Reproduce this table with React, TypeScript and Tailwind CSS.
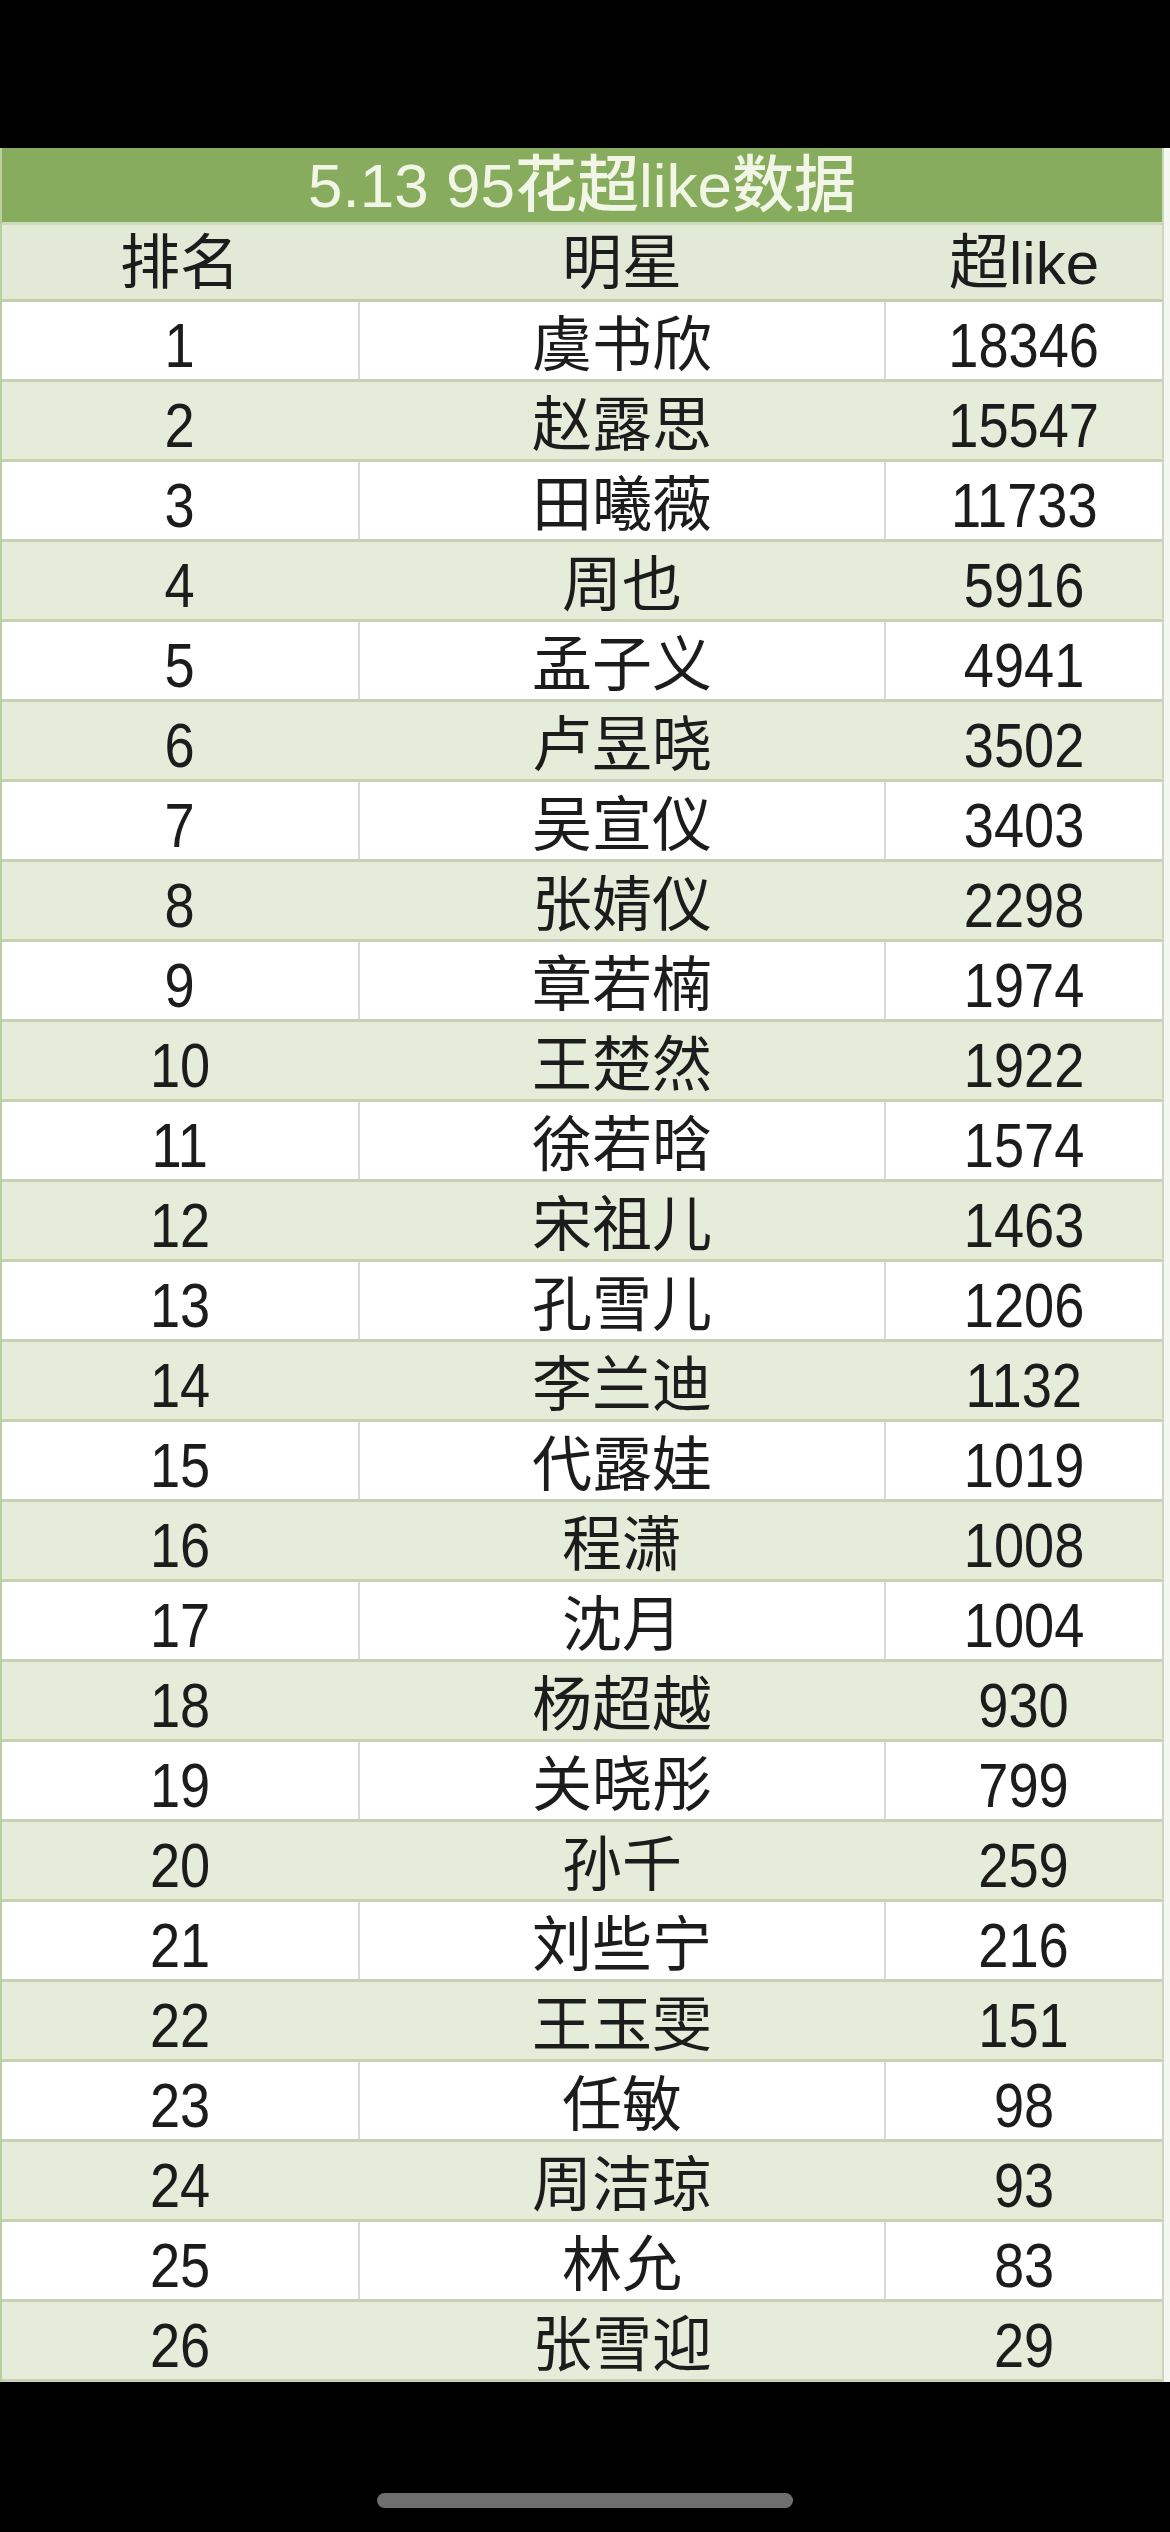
import React from "react";

const rows: [string, string][] = [
  ["虞书欣", "18346"],
  ["赵露思", "15547"],
  ["田曦薇", "11733"],
  ["周也", "5916"],
  ["孟子义", "4941"],
  ["卢昱晓", "3502"],
  ["吴宣仪", "3403"],
  ["张婧仪", "2298"],
  ["章若楠", "1974"],
  ["王楚然", "1922"],
  ["徐若晗", "1574"],
  ["宋祖儿", "1463"],
  ["孔雪儿", "1206"],
  ["李兰迪", "1132"],
  ["代露娃", "1019"],
  ["程潇", "1008"],
  ["沈月", "1004"],
  ["杨超越", "930"],
  ["关晓彤", "799"],
  ["孙千", "259"],
  ["刘些宁", "216"],
  ["王玉雯", "151"],
  ["任敏", "98"],
  ["周洁琼", "93"],
  ["林允", "83"],
  ["张雪迎", "29"],
];

export default function App() {
  return (
    <div className="w-[1170px] h-[2532px] bg-black flex flex-col font-['Liberation_Sans','Noto_Sans_CJK_SC',sans-serif] text-[#1c1c1c]">
      <div className="h-[148px] shrink-0" />
      <div className="bg-[#f4f6f0] shrink-0">
        <div className="w-[1164px] border-l-2 border-r-2 border-l-[#b9cfa0] border-r-[#cdd5c2]">
          <div className="h-[74px] bg-[#88ac5e] flex items-center justify-center text-[#f2f6e6] text-[62px] font-medium leading-none pt-[2px]">
            5.13 95花超like数据
          </div>
          <div className="h-[80px] bg-[#e2e9d6] border-t-[3px] border-t-[#cbdab8] border-b-[3px] border-b-[#c2cfae] grid grid-cols-[356px_528px_1fr] items-center text-[60px] leading-none pt-[4px]">
            <div className="text-center">排名</div>
            <div className="text-center">明星</div>
            <div className="text-center">超like</div>
          </div>
          {rows.map(([name, val], i) => {
            const white = i % 2 === 0;
            return (
              <div
                key={i}
                className={
                  white
                    ? "h-[80px] bg-white border-b-[3px] border-b-[#c6d2b4] grid grid-cols-[356px_528px_1fr] text-[60px] leading-none"
                    : "h-[80px] bg-[#e5ecda] border-b-[3px] border-b-[#c6d2b4] grid grid-cols-[356px_528px_1fr] text-[60px] leading-none"
                }
              >
                <div className="flex items-center justify-center pt-[10px]">
                  <span className="inline-block text-[63px] scale-x-[0.86]">{i + 1}</span>
                </div>
                <div
                  className={
                    white
                      ? "flex items-center justify-center pt-[10px] border-l-2 border-r-2 border-[#d6d9de]"
                      : "flex items-center justify-center pt-[10px] border-l-2 border-r-2 border-transparent"
                  }
                >
                  {name}
                </div>
                <div className="flex items-center justify-center pt-[10px]">
                  <span className="inline-block text-[63px] scale-x-[0.86]">{val}</span>
                </div>
              </div>
            );
          })}
        </div>
      </div>
      <div className="flex-1 flex justify-center pt-[111px]">
        <div className="w-[416px] h-[15px] rounded-full bg-[#6f6f6f]" />
      </div>
    </div>
  );
}
